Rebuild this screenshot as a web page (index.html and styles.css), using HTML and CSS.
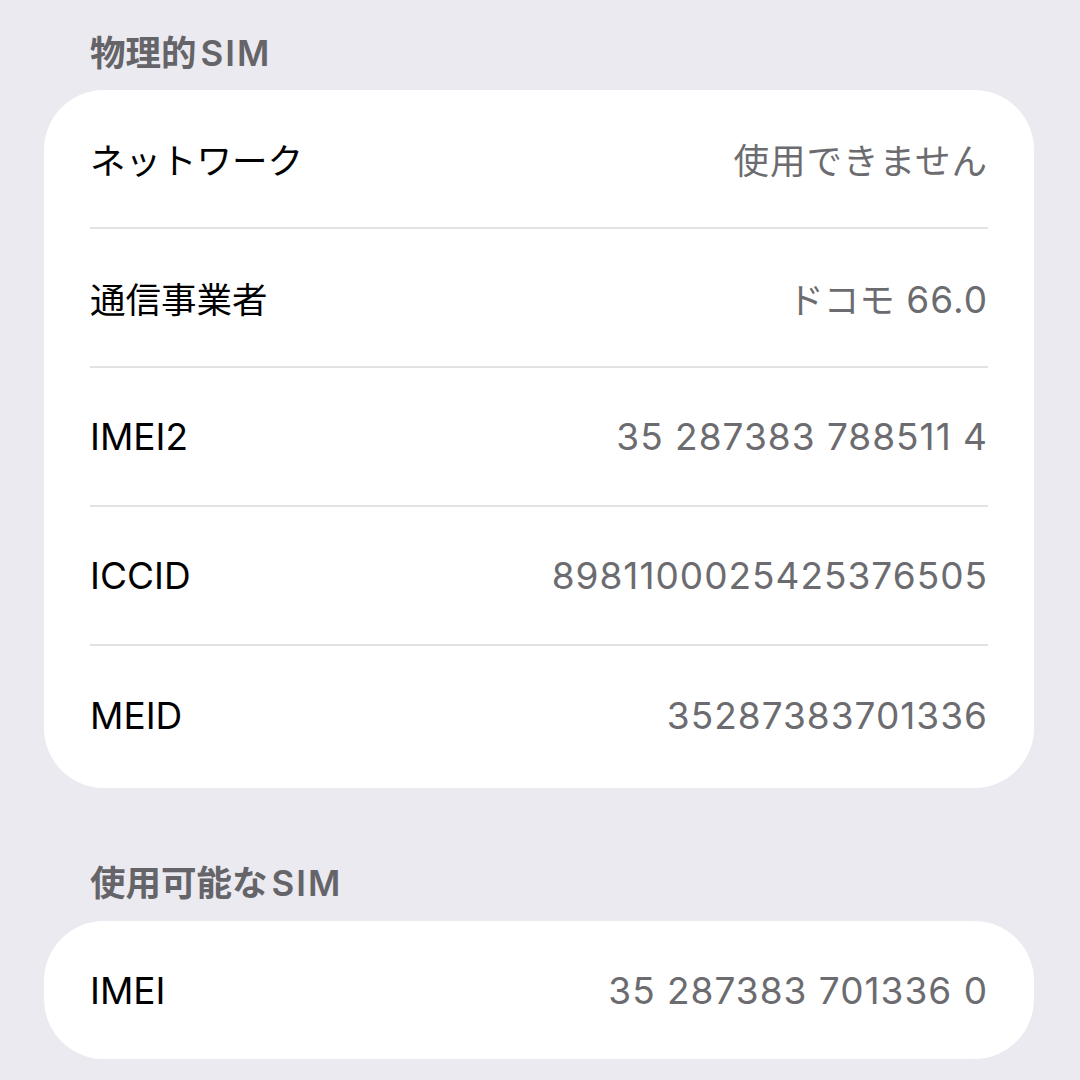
FILE: index.html
```html
<!DOCTYPE html>
<html lang="ja">
<head>
    <meta charset="UTF-8">
    <meta name="viewport" content="width=device-width, initial-scale=1.0">
    <title>SIM</title>
    <link rel="stylesheet" href="styles.css">
</head>
<body>

<div class="page">
    <h2 class="section-title"><span class="ja">物理的</span>SIM</h2>
    <div class="card">
        <div class="row">
            <span class="label ja">ネットワーク</span>
            <span class="value ja">使用できません</span>
        </div>
        <div class="row">
            <span class="label ja">通信事業者</span>
            <span class="value"><span class="ja">ドコモ</span> 66.0</span>
        </div>
        <div class="row">
            <span class="label">IMEI2</span>
            <span class="value">35 287383 788511 4</span>
        </div>
        <div class="row">
            <span class="label">ICCID</span>
            <span class="value">8981100025425376505</span>
        </div>
        <div class="row">
            <span class="label">MEID</span>
            <span class="value">35287383701336</span>
        </div>
    </div>

    <h2 class="section-title second"><span class="ja">使用可能な</span>SIM</h2>
    <div class="card single">
        <div class="row">
            <span class="label">IMEI</span>
            <span class="value">35 287383 701336 0</span>
        </div>
    </div>
</div>

</body>
</html>
```

FILE: styles.css
```css
body {
    margin: 0;
    padding: 0;
    background-color: #ebeaf0;
    font-family: Inter, "Noto Sans CJK JP", sans-serif;
}

.page {
    padding: 31px 46px 0 44px;
}

.section-title {
    margin: 0 0 0 46px;
    height: 59px;
    font-size: 35px;
    font-weight: 600;
    letter-spacing: 2px;
    color: #646469;
    line-height: 44px;
}

.section-title .ja {
    letter-spacing: 0;
    margin-right: 4px;
}

.section-title.second {
    margin-top: 73px;
    height: 60px;
}

.card {
    background-color: #fff;
    border-radius: 60px;
    padding: 0 46px 4px;
}

.card.single {
    padding-bottom: 0;
}

.row {
    display: flex;
    justify-content: space-between;
    align-items: center;
    height: 137px;
    border-bottom: 2px solid #e2e2e5;
    font-size: 37px;
}

.row:last-child {
    border-bottom: none;
    height: 138px;
}

.ja {
    font-size: 35.5px;
}

.label {
    color: #000;
}

.value {
    color: #6c6c70;
    letter-spacing: 1px;
}

.value .ja {
    letter-spacing: 0;
}
```
